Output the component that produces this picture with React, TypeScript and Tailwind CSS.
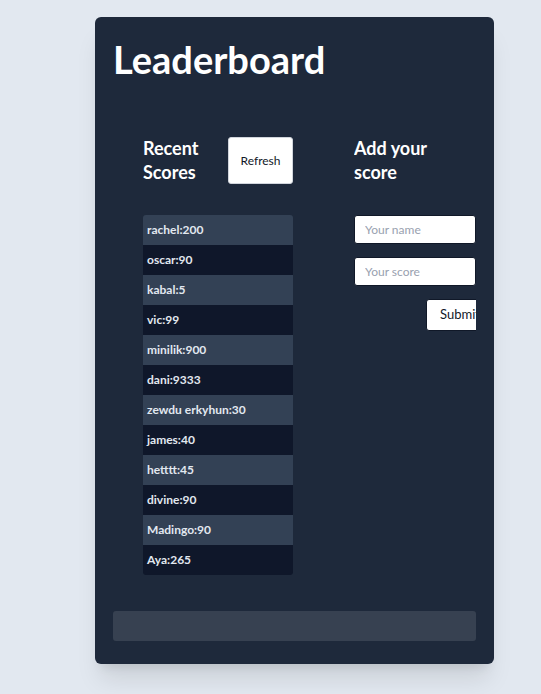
const scores = [
  "rachel:200",
  "oscar:90",
  "kabal:5",
  "vic:99",
  "minilik:900",
  "dani:9333",
  "zewdu erkyhun:30",
  "james:40",
  "hetttt:45",
  "divine:90",
  "Madingo:90",
  "Aya:265",
];

export default function App() {
  return (
    <main
      className="min-h-screen bg-[#e2e8f0] pt-[17px] pl-[95px]"
      style={{ fontFamily: 'Lato, "Noto Sans", sans-serif' }}
    >
      <div className="w-[399px] rounded-md bg-[#1e293b] px-[18px] pt-[20px] pb-[23px] shadow-xl">
        <h1 className="text-[38px] font-bold leading-[44px] text-white">Leaderboard</h1>

        <div className="mt-[54px] flex">
          {/* recent scores */}
          <section className="ml-[30px] w-[150px]">
            <div className="flex items-start justify-between">
              <h2 className="mt-[1px] text-[18px] font-bold leading-6 text-white">
                Recent
                <br />
                Scores
              </h2>
              <button className="mt-[2px] h-[47px] w-[65px] rounded-[3px] border border-gray-300 bg-white text-xs text-[#111827]">
                Refresh
              </button>
            </div>
            <ul className="mt-[31px] overflow-hidden rounded-[3px]">
              {scores.map((s, i) => (
                <li
                  key={i}
                  className={
                    "flex h-[30px] items-center px-1 text-xs font-bold text-[#e2e8f0] " +
                    (i % 2 === 0 ? "bg-[#334155]" : "bg-[#0f172a]")
                  }
                >
                  {s}
                </li>
              ))}
            </ul>
          </section>

          {/* add score */}
          <section className="ml-[61px] w-[122px] overflow-hidden">
            <h2 className="mt-[1px] text-[18px] font-bold leading-6 text-white">
              Add your
              <br />
              score
            </h2>
            <form className="mt-[31px] flex flex-col gap-[13px]">
              <input
                placeholder="Your name"
                className="h-[29px] w-full rounded-[3px] border border-gray-900 bg-white px-[10px] text-xs placeholder:text-gray-400"
              />
              <input
                placeholder="Your score"
                className="h-[29px] w-full rounded-[3px] border border-gray-900 bg-white px-[10px] text-xs placeholder:text-gray-400"
              />
              <div className="flex">
                <button
                  type="button"
                  className="ml-[72px] h-[32px] shrink-0 rounded-[3px] border border-gray-900 bg-white pl-[13px] pr-4 text-[13px] text-[#111827]"
                >
                  Submit
                </button>
              </div>
            </form>
          </section>
        </div>

        <div className="mt-[36px] h-[30px] rounded-[3px] bg-[#374151]" />
      </div>
    </main>
  );
}
